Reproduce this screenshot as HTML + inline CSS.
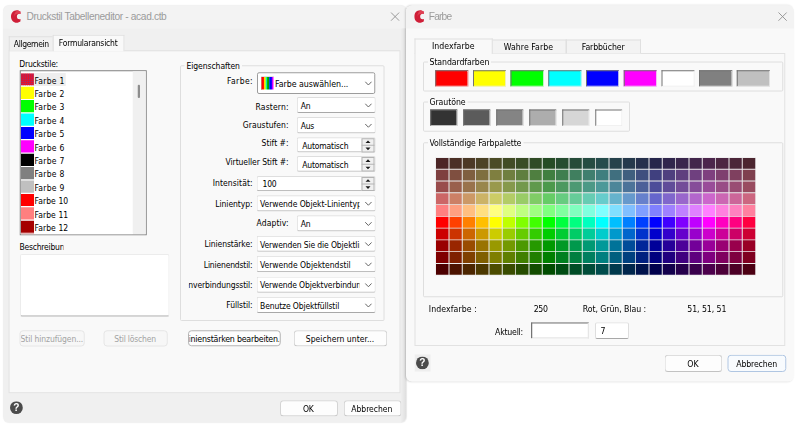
<!DOCTYPE html>
<html lang="de"><head><meta charset="utf-8"><title>Druckstil Tabelleneditor</title>
<style>
html,body{margin:0;padding:0;background:#fff;}
body{width:800px;height:429px;position:relative;overflow:hidden;font-family:"Liberation Sans",sans-serif;}
.sc{position:absolute;left:0;top:0;width:3200px;height:1716px;transform:scale(.25);transform-origin:0 0;}
.a{position:absolute;box-sizing:border-box;}
.t{white-space:nowrap;}
.t span{white-space:nowrap;}

.dlg{border-radius:24px;overflow:hidden;}
.btn{border:4px solid #d4d4d4;border-bottom-color:#c2c2c2;border-radius:14px;background:#fdfdfd;overflow:hidden;}
.btnd{border:4px solid #e6e6e6;border-radius:14px;background:#f7f7f7;overflow:hidden;}
.cb{border:4px solid #dedede;border-bottom-color:#a8a8a8;border-radius:8px;background:#fff;overflow:hidden;}
.grp{border:4px solid #dedede;border-radius:6px;}
.sw{border-style:solid;border-width:4.8px 3.2px 3.2px 4.8px;border-color:#727272 #ececec #ececec #727272;}

</style></head><body>
<div class="sc">
<div class="a dlg" style="left:12px;top:22px;width:1613.2px;height:1668px;background:#f0f0f0;box-shadow:0 0 4px rgba(0,0,0,.08);"></div>
<div class="a " style="left:12px;top:22px;width:1613.2px;height:92.4px;background:#f3f3f3;border-radius:24px 24px 0 0;"></div>
<div class="a " style="left:1602.4px;top:112.8px;width:22.8px;height:1577.2px;background:linear-gradient(90deg,rgba(0,0,0,0),rgba(0,0,0,0.075));border-radius:0 0 24px 0;"></div>
<svg class="a" style="left:44px;top:39.6px" width="39.2" height="52" viewBox="0 0 9.8 13"><path d="M6.6 0.2 C2.8 -0.3 0 2.6 0 6.5 C0 10.4 2.8 13.3 6.6 12.8 L9.5 11.4 L9.8 8.9 C8.3 9.7 5.9 9.3 5.9 6.5 C5.9 3.7 8.3 3.3 9.8 4.1 L9.5 1.6 Z" fill="#cf1f38"/><path d="M6.6 0.2 C4.2 1.5 3 4 3.2 6.8 C3.6 4.5 5.5 3 9.8 4.1 L9.5 1.6 Z" fill="#e4485a" opacity="0.8"/></svg>
<div class="a t" style="left:105.6px;top:41.36px;line-height:53.04px;font-size:40.8px;font-family:'Liberation Sans',sans-serif;color:#9b9b9b;letter-spacing:-1.47px;"><span>Druckstil Tabelleneditor - acad.ctb</span></div>
<svg class="a" style="left:1560.6px;top:46.6px" width="38.8" height="38.8" viewBox="0 0 9.7 9.7"><path d="M1 1 L8.7 8.7 M8.7 1 L1 8.7" fill="none" stroke="#8f8f8f" stroke-width="0.9" stroke-linecap="round"/></svg>
<div class="a " style="left:34px;top:200.8px;width:1568px;height:1372px;background:#f9f9f9;border:4px solid #e0e0e0;"></div>
<div class="a " style="left:35.2px;top:144.8px;width:178.8px;height:58px;background:#f0f0f0;border:4px solid #e0e0e0;border-bottom:none;"></div>
<div class="a " style="left:211.2px;top:139.2px;width:286.8px;height:65.6px;background:#f9f9f9;border:4px solid #e0e0e0;border-bottom:none;"></div>
<div class="a t" style="left:55.2px;top:154.72px;line-height:44.2px;font-size:34px;font-family:'DejaVu Sans Condensed','Liberation Sans',sans-serif;color:#000;letter-spacing:-1.41px;"><span>Allgemein</span></div>
<div class="a t" style="left:235.2px;top:150.72px;line-height:44.2px;font-size:34px;font-family:'DejaVu Sans Condensed','Liberation Sans',sans-serif;color:#000;letter-spacing:-0.8px;"><span>Formularansicht</span></div>
<div class="a t" style="left:77.2px;top:231.92px;line-height:44.2px;font-size:34px;font-family:'DejaVu Sans Condensed','Liberation Sans',sans-serif;color:#000;letter-spacing:-0.85px;"><span>Druckstile:</span></div>
<div class="a " style="left:79.2px;top:281.2px;width:508px;height:659.6px;background:#fff;border:4px solid #7f7f7f;overflow:hidden;"></div>
<div class="a " style="left:531.2px;top:285.2px;width:52px;height:651.6px;background:#f0f0f0;"></div>
<div class="a " style="left:551.2px;top:338.8px;width:8.8px;height:53.6px;background:#8d8d8d;border-radius:4px;"></div>
<div class="a " style="left:136.4px;top:292.4px;width:126.8px;height:52px;background:#eeeeee;"></div>
<svg class="a" style="left:84px;top:293.2px" width="51.6" height="48.8" viewBox="0 0 12.9 12.2"><rect width="12.9" height="12.2" fill="#e6122a"/><g fill="#6444a8"><rect x="0.55" y="0.50" width="0.8" height="0.8"/><rect x="2.41" y="0.50" width="0.8" height="0.8"/><rect x="4.27" y="0.50" width="0.8" height="0.8"/><rect x="6.13" y="0.50" width="0.8" height="0.8"/><rect x="7.99" y="0.50" width="0.8" height="0.8"/><rect x="9.85" y="0.50" width="0.8" height="0.8"/><rect x="11.71" y="0.50" width="0.8" height="0.8"/><rect x="0.55" y="2.36" width="0.8" height="0.8"/><rect x="2.41" y="2.36" width="0.8" height="0.8"/><rect x="4.27" y="2.36" width="0.8" height="0.8"/><rect x="6.13" y="2.36" width="0.8" height="0.8"/><rect x="7.99" y="2.36" width="0.8" height="0.8"/><rect x="9.85" y="2.36" width="0.8" height="0.8"/><rect x="11.71" y="2.36" width="0.8" height="0.8"/><rect x="0.55" y="4.22" width="0.8" height="0.8"/><rect x="2.41" y="4.22" width="0.8" height="0.8"/><rect x="4.27" y="4.22" width="0.8" height="0.8"/><rect x="6.13" y="4.22" width="0.8" height="0.8"/><rect x="7.99" y="4.22" width="0.8" height="0.8"/><rect x="9.85" y="4.22" width="0.8" height="0.8"/><rect x="11.71" y="4.22" width="0.8" height="0.8"/><rect x="0.55" y="6.08" width="0.8" height="0.8"/><rect x="2.41" y="6.08" width="0.8" height="0.8"/><rect x="4.27" y="6.08" width="0.8" height="0.8"/><rect x="6.13" y="6.08" width="0.8" height="0.8"/><rect x="7.99" y="6.08" width="0.8" height="0.8"/><rect x="9.85" y="6.08" width="0.8" height="0.8"/><rect x="11.71" y="6.08" width="0.8" height="0.8"/><rect x="0.55" y="7.94" width="0.8" height="0.8"/><rect x="2.41" y="7.94" width="0.8" height="0.8"/><rect x="4.27" y="7.94" width="0.8" height="0.8"/><rect x="6.13" y="7.94" width="0.8" height="0.8"/><rect x="7.99" y="7.94" width="0.8" height="0.8"/><rect x="9.85" y="7.94" width="0.8" height="0.8"/><rect x="11.71" y="7.94" width="0.8" height="0.8"/><rect x="0.55" y="9.80" width="0.8" height="0.8"/><rect x="2.41" y="9.80" width="0.8" height="0.8"/><rect x="4.27" y="9.80" width="0.8" height="0.8"/><rect x="6.13" y="9.80" width="0.8" height="0.8"/><rect x="7.99" y="9.80" width="0.8" height="0.8"/><rect x="9.85" y="9.80" width="0.8" height="0.8"/><rect x="11.71" y="9.80" width="0.8" height="0.8"/><rect x="0.55" y="11.66" width="0.8" height="0.8"/><rect x="2.41" y="11.66" width="0.8" height="0.8"/><rect x="4.27" y="11.66" width="0.8" height="0.8"/><rect x="6.13" y="11.66" width="0.8" height="0.8"/><rect x="7.99" y="11.66" width="0.8" height="0.8"/><rect x="9.85" y="11.66" width="0.8" height="0.8"/><rect x="11.71" y="11.66" width="0.8" height="0.8"/></g></svg>
<div class="a t" style="left:138px;top:299.52px;line-height:44.2px;font-size:34px;font-family:'DejaVu Sans Condensed','Liberation Sans',sans-serif;color:#000;letter-spacing:0.97px;"><span>Farbe 1</span></div>
<div class="a " style="left:84px;top:346.8px;width:51.6px;height:48.8px;background:#ffff00;"></div>
<div class="a t" style="left:138px;top:353.12px;line-height:44.2px;font-size:34px;font-family:'DejaVu Sans Condensed','Liberation Sans',sans-serif;color:#000;letter-spacing:0.97px;"><span>Farbe 2</span></div>
<div class="a " style="left:84px;top:400.4px;width:51.6px;height:48.8px;background:#00ff00;"></div>
<div class="a t" style="left:138px;top:406.72px;line-height:44.2px;font-size:34px;font-family:'DejaVu Sans Condensed','Liberation Sans',sans-serif;color:#000;letter-spacing:0.97px;"><span>Farbe 3</span></div>
<div class="a " style="left:84px;top:454px;width:51.6px;height:48.8px;background:#00ffff;"></div>
<div class="a t" style="left:138px;top:460.32px;line-height:44.2px;font-size:34px;font-family:'DejaVu Sans Condensed','Liberation Sans',sans-serif;color:#000;letter-spacing:0.97px;"><span>Farbe 4</span></div>
<div class="a " style="left:84px;top:507.6px;width:51.6px;height:48.8px;background:#0000ff;"></div>
<div class="a t" style="left:138px;top:513.92px;line-height:44.2px;font-size:34px;font-family:'DejaVu Sans Condensed','Liberation Sans',sans-serif;color:#000;letter-spacing:0.97px;"><span>Farbe 5</span></div>
<div class="a " style="left:84px;top:561.2px;width:51.6px;height:48.8px;background:#ff00ff;"></div>
<div class="a t" style="left:138px;top:567.52px;line-height:44.2px;font-size:34px;font-family:'DejaVu Sans Condensed','Liberation Sans',sans-serif;color:#000;letter-spacing:0.97px;"><span>Farbe 6</span></div>
<div class="a " style="left:84px;top:614.8px;width:51.6px;height:48.8px;background:#000000;"></div>
<div class="a t" style="left:138px;top:621.12px;line-height:44.2px;font-size:34px;font-family:'DejaVu Sans Condensed','Liberation Sans',sans-serif;color:#000;letter-spacing:0.97px;"><span>Farbe 7</span></div>
<div class="a " style="left:84px;top:668.4px;width:51.6px;height:48.8px;background:#808080;"></div>
<div class="a t" style="left:138px;top:674.72px;line-height:44.2px;font-size:34px;font-family:'DejaVu Sans Condensed','Liberation Sans',sans-serif;color:#000;letter-spacing:0.97px;"><span>Farbe 8</span></div>
<div class="a " style="left:84px;top:722px;width:51.6px;height:48.8px;background:#c0c0c0;"></div>
<div class="a t" style="left:138px;top:728.32px;line-height:44.2px;font-size:34px;font-family:'DejaVu Sans Condensed','Liberation Sans',sans-serif;color:#000;letter-spacing:0.97px;"><span>Farbe 9</span></div>
<div class="a " style="left:84px;top:775.6px;width:51.6px;height:48.8px;background:#ff0000;"></div>
<div class="a t" style="left:138px;top:781.92px;line-height:44.2px;font-size:34px;font-family:'DejaVu Sans Condensed','Liberation Sans',sans-serif;color:#000;letter-spacing:0.32px;"><span>Farbe 10</span></div>
<div class="a " style="left:84px;top:829.2px;width:51.6px;height:48.8px;background:#ff7f7f;"></div>
<div class="a t" style="left:138px;top:835.52px;line-height:44.2px;font-size:34px;font-family:'DejaVu Sans Condensed','Liberation Sans',sans-serif;color:#000;letter-spacing:0.32px;"><span>Farbe 11</span></div>
<div class="a " style="left:84px;top:882.8px;width:51.6px;height:48.8px;background:#a50000;"></div>
<div class="a t" style="left:138px;top:889.12px;line-height:44.2px;font-size:34px;font-family:'DejaVu Sans Condensed','Liberation Sans',sans-serif;color:#000;letter-spacing:0.32px;"><span>Farbe 12</span></div>
<div class="a " style="left:83.2px;top:931.2px;width:448px;height:5.6px;background:#fff;"></div>
<div class="a " style="left:84px;top:933.2px;width:51.6px;height:3.6px;background:#dd9a9a;"></div>
<div class="a" style="left:76px;top:964.72px;width:178.4px;height:44.2px;overflow:hidden"><div class="a t" style="left:2px;top:0px;line-height:44.2px;font-size:34px;font-family:'DejaVu Sans Condensed','Liberation Sans',sans-serif;color:#000;letter-spacing:-0.91px;"><span>Beschreibung:</span></div></div>
<div class="a " style="left:80px;top:1016px;width:598.4px;height:251.2px;background:#fff;border:4px solid #ececec;border-bottom:5.6px solid #a9a9a9;border-radius:8px;"></div>
<div class="a btnd" style="left:77.6px;top:1320.8px;width:261.2px;height:65.2px;"></div>
<div class="a btnd" style="left:413.6px;top:1320.8px;width:257.2px;height:65.2px;"></div>
<div class="a" style="left:84px;top:1333.52px;width:250.4px;height:44.2px;overflow:hidden"><div class="a t" style="right:1.6px;top:0px;line-height:44.2px;font-size:34px;font-family:'DejaVu Sans Condensed','Liberation Sans',sans-serif;color:#a3a3a3;letter-spacing:-0.4px;"><span>Stil hinzufügen...</span></div></div>
<div class="a t" style="left:457.2px;top:1333.52px;line-height:44.2px;font-size:34px;font-family:'DejaVu Sans Condensed','Liberation Sans',sans-serif;color:#a3a3a3;letter-spacing:-0.81px;"><span>Stil löschen</span></div>
<div class="a grp" style="left:720px;top:260.8px;width:818px;height:1023.2px;"></div>
<div class="a " style="left:738px;top:240px;width:230px;height:48px;background:#f9f9f9;"></div>
<div class="a t" style="left:745.6px;top:243.12px;line-height:44.2px;font-size:34px;font-family:'DejaVu Sans Condensed','Liberation Sans',sans-serif;color:#000;letter-spacing:-0.21px;"><span>Eigenschaften</span></div>
<div class="a t" style="right:2188px;top:299.52px;line-height:44.2px;font-size:34px;font-family:'DejaVu Sans Condensed','Liberation Sans',sans-serif;color:#000;letter-spacing:1.61px;"><span>Farbe:</span></div>
<div class="a cb" style="left:1028px;top:289.2px;width:472.8px;height:86.4px;border-color:#9c9c9c;"></div>
<svg class="a" style="left:1458px;top:324px" width="31.2" height="20" viewBox="0 0 7.80 5.00"><path d="M1 1 L3.90 4.00 L6.80 1" fill="none" stroke="#5e5e5e" stroke-width="0.95" stroke-linecap="round" stroke-linejoin="round"/></svg>
<div class="a t" style="left:1100px;top:313.16px;line-height:45.76px;font-size:35.2px;font-family:'DejaVu Sans Condensed','Liberation Sans',sans-serif;color:#000;letter-spacing:-0.2px;"><span>Farbe auswählen...</span></div>
<div class="a " style="left:1045.6px;top:308px;width:48.8px;height:50.4px;background:linear-gradient(90deg,#ff0000 0%,#ff0000 16%,#ffd000 24%,#ffff00 30%,#20ff80 38%,#00e8c0 43%,#00c000 50%,#00a000 58%,#0060e0 66%,#0000ff 72%,#0000ff 82%,#c000ff 90%,#ff00ff 96%);box-shadow:0 0 0 1.6px #b0b0b0;"></div>
<div class="a t" style="right:2044.96px;top:406.32px;line-height:44.2px;font-size:34px;font-family:'DejaVu Sans Condensed','Liberation Sans',sans-serif;color:#000;letter-spacing:0.64px;"><span>Rastern:</span></div>
<div class="a cb" style="left:1187.2px;top:387.6px;width:315.6px;height:64px;"></div>
<svg class="a" style="left:1458px;top:411.8px" width="31.2" height="20" viewBox="0 0 7.80 5.00"><path d="M1 1 L3.90 4.00 L6.80 1" fill="none" stroke="#5e5e5e" stroke-width="0.95" stroke-linecap="round" stroke-linejoin="round"/></svg>
<div class="a t" style="left:1203.2px;top:400.72px;line-height:44.2px;font-size:34px;font-family:'DejaVu Sans Condensed','Liberation Sans',sans-serif;color:#000;letter-spacing:-1.16px;"><span>An</span></div>
<div class="a t" style="right:2045.36px;top:477.92px;line-height:44.2px;font-size:34px;font-family:'DejaVu Sans Condensed','Liberation Sans',sans-serif;color:#000;letter-spacing:0.24px;"><span>Graustufen:</span></div>
<div class="a cb" style="left:1187.2px;top:468.4px;width:315.6px;height:65.6px;"></div>
<svg class="a" style="left:1458px;top:493.4px" width="31.2" height="20" viewBox="0 0 7.80 5.00"><path d="M1 1 L3.90 4.00 L6.80 1" fill="none" stroke="#5e5e5e" stroke-width="0.95" stroke-linecap="round" stroke-linejoin="round"/></svg>
<div class="a t" style="left:1203.2px;top:481.12px;line-height:44.2px;font-size:34px;font-family:'DejaVu Sans Condensed','Liberation Sans',sans-serif;color:#000;letter-spacing:-1.42px;"><span>Aus</span></div>
<div class="a t" style="right:2045.52px;top:550.32px;line-height:44.2px;font-size:34px;font-family:'DejaVu Sans Condensed','Liberation Sans',sans-serif;color:#000;letter-spacing:0.08px;"><span>Stift #:</span></div>
<div class="a cb" style="left:1187.2px;top:549.2px;width:315.6px;height:61.2px;"></div>
<div class="a " style="left:1445.6px;top:552.8px;width:52px;height:56.8px;background:#f0f0f0;border:4px solid #b4b4b4;"></div>
<div class="a " style="left:1445.6px;top:579.2px;width:52px;height:4px;background:#b4b4b4;"></div>
<svg class="a" style="left:1459.6px;top:552.8px" width="24" height="56.8" viewBox="0 0 6 14.20"><path d="M0.5 4.85 L3 2.15 L5.5 4.85 Z M0.5 9.35 L3 12.05 L5.5 9.35 Z" fill="#1a1a1a"/></svg>
<div class="a t" style="left:1209.2px;top:561.52px;line-height:44.2px;font-size:34px;font-family:'DejaVu Sans Condensed','Liberation Sans',sans-serif;color:#000;letter-spacing:-0.74px;"><span>Automatisch</span></div>
<div class="a t" style="right:2045.88px;top:626.32px;line-height:44.2px;font-size:34px;font-family:'DejaVu Sans Condensed','Liberation Sans',sans-serif;color:#000;letter-spacing:-0.28px;"><span>Virtueller Stift #:</span></div>
<div class="a cb" style="left:1187.2px;top:624px;width:315.6px;height:62.8px;"></div>
<div class="a " style="left:1445.6px;top:627.6px;width:52px;height:58.4px;background:#f0f0f0;border:4px solid #b4b4b4;"></div>
<div class="a " style="left:1445.6px;top:654.8px;width:52px;height:4px;background:#b4b4b4;"></div>
<svg class="a" style="left:1459.6px;top:627.6px" width="24" height="58.4" viewBox="0 0 6 14.60"><path d="M0.5 4.95 L3 2.25 L5.5 4.95 Z M0.5 9.65 L3 12.35 L5.5 9.65 Z" fill="#1a1a1a"/></svg>
<div class="a t" style="left:1209.2px;top:637.12px;line-height:44.2px;font-size:34px;font-family:'DejaVu Sans Condensed','Liberation Sans',sans-serif;color:#000;letter-spacing:-0.74px;"><span>Automatisch</span></div>
<div class="a t" style="right:2189.24px;top:710.72px;line-height:44.2px;font-size:34px;font-family:'DejaVu Sans Condensed','Liberation Sans',sans-serif;color:#000;letter-spacing:0.36px;"><span>Intensität:</span></div>
<div class="a cb" style="left:1025.6px;top:704px;width:477.2px;height:61.2px;"></div>
<div class="a " style="left:1445.6px;top:707.6px;width:52px;height:56.8px;background:#f0f0f0;border:4px solid #b4b4b4;"></div>
<div class="a " style="left:1445.6px;top:734px;width:52px;height:4px;background:#b4b4b4;"></div>
<svg class="a" style="left:1459.6px;top:707.6px" width="24" height="56.8" viewBox="0 0 6 14.20"><path d="M0.5 4.85 L3 2.15 L5.5 4.85 Z M0.5 9.35 L3 12.05 L5.5 9.35 Z" fill="#1a1a1a"/></svg>
<div class="a t" style="left:1050.4px;top:714.32px;line-height:44.2px;font-size:34px;font-family:'DejaVu Sans Condensed','Liberation Sans',sans-serif;color:#000;letter-spacing:-1.06px;"><span>100</span></div>
<div class="a t" style="right:2189.88px;top:793.52px;line-height:44.2px;font-size:34px;font-family:'DejaVu Sans Condensed','Liberation Sans',sans-serif;color:#000;letter-spacing:-0.27px;"><span>Linientyp:</span></div>
<div class="a cb" style="left:1025.6px;top:780.8px;width:477.2px;height:64.8px;"></div>
<svg class="a" style="left:1458px;top:805.4px" width="31.2" height="20" viewBox="0 0 7.80 5.00"><path d="M1 1 L3.90 4.00 L6.80 1" fill="none" stroke="#5e5e5e" stroke-width="0.95" stroke-linecap="round" stroke-linejoin="round"/></svg>
<div class="a" style="left:1036px;top:792.32px;width:402.4px;height:44.2px;overflow:hidden"><div class="a t" style="left:4px;top:0px;line-height:44.2px;font-size:34px;font-family:'DejaVu Sans Condensed','Liberation Sans',sans-serif;color:#000;letter-spacing:-0.26px;"><span>Verwende Objekt-Linientyp</span></div></div>
<div class="a t" style="right:2045.12px;top:868.72px;line-height:44.2px;font-size:34px;font-family:'DejaVu Sans Condensed','Liberation Sans',sans-serif;color:#000;letter-spacing:0.48px;"><span>Adaptiv:</span></div>
<div class="a cb" style="left:1187.2px;top:861.2px;width:315.6px;height:64.8px;"></div>
<svg class="a" style="left:1458px;top:885.8px" width="31.2" height="20" viewBox="0 0 7.80 5.00"><path d="M1 1 L3.90 4.00 L6.80 1" fill="none" stroke="#5e5e5e" stroke-width="0.95" stroke-linecap="round" stroke-linejoin="round"/></svg>
<div class="a t" style="left:1203.2px;top:875.12px;line-height:44.2px;font-size:34px;font-family:'DejaVu Sans Condensed','Liberation Sans',sans-serif;color:#000;letter-spacing:-1.16px;"><span>An</span></div>
<div class="a t" style="right:2189.96px;top:953.12px;line-height:44.2px;font-size:34px;font-family:'DejaVu Sans Condensed','Liberation Sans',sans-serif;color:#000;letter-spacing:-0.35px;"><span>Linienstärke:</span></div>
<div class="a cb" style="left:1025.6px;top:942.8px;width:477.2px;height:64px;"></div>
<svg class="a" style="left:1458px;top:967px" width="31.2" height="20" viewBox="0 0 7.80 5.00"><path d="M1 1 L3.90 4.00 L6.80 1" fill="none" stroke="#5e5e5e" stroke-width="0.95" stroke-linecap="round" stroke-linejoin="round"/></svg>
<div class="a" style="left:1036px;top:955.52px;width:402.4px;height:44.2px;overflow:hidden"><div class="a t" style="left:4px;top:0px;line-height:44.2px;font-size:34px;font-family:'DejaVu Sans Condensed','Liberation Sans',sans-serif;color:#000;letter-spacing:-0.52px;"><span>Verwenden Sie die Objektlinienstärke</span></div></div>
<div class="a t" style="right:2190.32px;top:1036.32px;line-height:44.2px;font-size:34px;font-family:'DejaVu Sans Condensed','Liberation Sans',sans-serif;color:#000;letter-spacing:-0.72px;"><span>Linienendstil:</span></div>
<div class="a cb" style="left:1025.6px;top:1023.2px;width:477.2px;height:66px;"></div>
<svg class="a" style="left:1458px;top:1048.4px" width="31.2" height="20" viewBox="0 0 7.80 5.00"><path d="M1 1 L3.90 4.00 L6.80 1" fill="none" stroke="#5e5e5e" stroke-width="0.95" stroke-linecap="round" stroke-linejoin="round"/></svg>
<div class="a t" style="left:1040px;top:1038.32px;line-height:44.2px;font-size:34px;font-family:'DejaVu Sans Condensed','Liberation Sans',sans-serif;color:#000;letter-spacing:-0.07px;"><span>Verwende Objektendstil</span></div>
<div class="a" style="left:754.8px;top:1117.52px;width:257.2px;height:44.2px;overflow:hidden"><div class="a t" style="right:2.08px;top:0px;line-height:44.2px;font-size:34px;font-family:'DejaVu Sans Condensed','Liberation Sans',sans-serif;color:#000;letter-spacing:-0.48px;"><span>Linienverbindungsstil:</span></div></div>
<div class="a cb" style="left:1025.6px;top:1106px;width:477.2px;height:64.8px;"></div>
<svg class="a" style="left:1458px;top:1130.6px" width="31.2" height="20" viewBox="0 0 7.80 5.00"><path d="M1 1 L3.90 4.00 L6.80 1" fill="none" stroke="#5e5e5e" stroke-width="0.95" stroke-linecap="round" stroke-linejoin="round"/></svg>
<div class="a" style="left:1036px;top:1119.12px;width:402.4px;height:44.2px;overflow:hidden"><div class="a t" style="left:4px;top:0px;line-height:44.2px;font-size:34px;font-family:'DejaVu Sans Condensed','Liberation Sans',sans-serif;color:#000;letter-spacing:-0.51px;"><span>Verwende Objektverbindungsstil</span></div></div>
<div class="a t" style="right:2189.88px;top:1197.92px;line-height:44.2px;font-size:34px;font-family:'DejaVu Sans Condensed','Liberation Sans',sans-serif;color:#000;letter-spacing:-0.29px;"><span>Füllstil:</span></div>
<div class="a cb" style="left:1025.6px;top:1186.8px;width:477.2px;height:65.2px;"></div>
<svg class="a" style="left:1458px;top:1211.6px" width="31.2" height="20" viewBox="0 0 7.80 5.00"><path d="M1 1 L3.90 4.00 L6.80 1" fill="none" stroke="#5e5e5e" stroke-width="0.95" stroke-linecap="round" stroke-linejoin="round"/></svg>
<div class="a t" style="left:1040.4px;top:1201.52px;line-height:44.2px;font-size:34px;font-family:'DejaVu Sans Condensed','Liberation Sans',sans-serif;color:#000;letter-spacing:-0.52px;"><span>Benutze Objektfüllstil</span></div>
<div class="a btn" style="left:752px;top:1320.8px;width:370.8px;height:64.4px;border-color:#b4b4b4;"></div>
<div class="a" style="left:758.4px;top:1332.76px;width:358.4px;height:45.76px;overflow:hidden"><div class="a t" style="left:-420.48px;width:1200px;text-align:center;top:0px;line-height:45.76px;font-size:35.2px;font-family:'DejaVu Sans Condensed','Liberation Sans',sans-serif;color:#000;letter-spacing:-0.92px;"><span>Linienstärken bearbeiten...</span></div></div>
<div class="a btn" style="left:1175.2px;top:1320.8px;width:374px;height:65.2px;"></div>
<div class="a t" style="left:1223.2px;top:1333.92px;line-height:44.2px;font-size:34px;font-family:'DejaVu Sans Condensed','Liberation Sans',sans-serif;color:#000;letter-spacing:0.2px;"><span>Speichern unter...</span></div>
<svg class="a" style="left:40px;top:1604.8px" width="51.2" height="51.2" viewBox="0 0 12 12"><circle cx="6" cy="6" r="6" fill="#4b4b4b"/><text x="6" y="9.3" text-anchor="middle" font-family="Liberation Sans,sans-serif" font-weight="bold" font-size="9.5" fill="#fff">?</text></svg>
<div class="a btn" style="left:1119.6px;top:1600.8px;width:232.4px;height:64.8px;"></div>
<div class="a t" style="left:1212px;top:1615.12px;line-height:44.2px;font-size:34px;font-family:'DejaVu Sans Condensed','Liberation Sans',sans-serif;color:#000;letter-spacing:-0.87px;"><span>OK</span></div>
<div class="a btn" style="left:1374.8px;top:1600.8px;width:230.8px;height:64.8px;"></div>
<div class="a t" style="left:1404.8px;top:1615.12px;line-height:44.2px;font-size:34px;font-family:'DejaVu Sans Condensed','Liberation Sans',sans-serif;color:#000;letter-spacing:-0px;"><span>Abbrechen</span></div>
<div class="a dlg" style="left:1624px;top:22px;width:1552px;height:1504.4px;background:#f9f9f9;box-shadow:-4px 0 8px rgba(0,0,0,.16);"></div>
<div class="a " style="left:1624px;top:22px;width:1552px;height:92px;background:#f3f3f3;border-radius:24px 24px 0 0;"></div>
<svg class="a" style="left:1656.8px;top:39.6px" width="39.2" height="52" viewBox="0 0 9.8 13"><path d="M6.6 0.2 C2.8 -0.3 0 2.6 0 6.5 C0 10.4 2.8 13.3 6.6 12.8 L9.5 11.4 L9.8 8.9 C8.3 9.7 5.9 9.3 5.9 6.5 C5.9 3.7 8.3 3.3 9.8 4.1 L9.5 1.6 Z" fill="#cf1f38"/><path d="M6.6 0.2 C4.2 1.5 3 4 3.2 6.8 C3.6 4.5 5.5 3 9.8 4.1 L9.5 1.6 Z" fill="#e4485a" opacity="0.8"/></svg>
<div class="a t" style="left:1715.2px;top:41.36px;line-height:53.04px;font-size:40.8px;font-family:'Liberation Sans',sans-serif;color:#9b9b9b;letter-spacing:-3.32px;"><span>Farbe</span></div>
<svg class="a" style="left:3111.4px;top:46.6px" width="38.8" height="38.8" viewBox="0 0 9.7 9.7"><path d="M1 1 L8.7 8.7 M8.7 1 L1 8.7" fill="none" stroke="#8f8f8f" stroke-width="0.9" stroke-linecap="round"/></svg>
<div class="a " style="left:1658px;top:212px;width:1483.2px;height:1172px;background:#f9f9f9;border:4px solid #e2e2e2;"></div>
<div class="a " style="left:1968px;top:158px;width:298px;height:56px;background:#f3f3f3;border:4px solid #e0e0e0;border-bottom:none;"></div>
<div class="a " style="left:2264px;top:158px;width:300px;height:56px;background:#f3f3f3;border:4px solid #e0e0e0;border-bottom:none;"></div>
<div class="a " style="left:1658px;top:154px;width:313.2px;height:62px;background:#f9f9f9;border:4px solid #e0e0e0;border-bottom:none;"></div>
<div class="a t" style="left:1728px;top:162.32px;line-height:45.24px;font-size:34.8px;font-family:'DejaVu Sans Condensed','Liberation Sans',sans-serif;color:#000;letter-spacing:0.17px;"><span>Indexfarbe</span></div>
<div class="a t" style="left:2015.2px;top:167.12px;line-height:45.24px;font-size:34.8px;font-family:'DejaVu Sans Condensed','Liberation Sans',sans-serif;color:#000;letter-spacing:0.16px;"><span>Wahre Farbe</span></div>
<div class="a t" style="left:2327.2px;top:167.12px;line-height:45.24px;font-size:34.8px;font-family:'DejaVu Sans Condensed','Liberation Sans',sans-serif;color:#000;letter-spacing:-0.48px;"><span>Farbbücher</span></div>
<div class="a grp" style="left:1692px;top:246px;width:1440.8px;height:120px;"></div>
<div class="a " style="left:1712px;top:224px;width:252px;height:48px;background:#f9f9f9;"></div>
<div class="a t" style="left:1718px;top:225.12px;line-height:45.24px;font-size:34.8px;font-family:'DejaVu Sans Condensed','Liberation Sans',sans-serif;color:#000;letter-spacing:-0.37px;"><span>Standardfarben</span></div>
<div class="a sw" style="left:1740.8px;top:281.2px;width:132.4px;height:65.2px;background:#ff0000;"></div>
<div class="a sw" style="left:1891.6px;top:281.2px;width:132.4px;height:65.2px;background:#ffff00;"></div>
<div class="a sw" style="left:2042.4px;top:281.2px;width:132.4px;height:65.2px;background:#00ff00;"></div>
<div class="a sw" style="left:2193.2px;top:281.2px;width:132.4px;height:65.2px;background:#00ffff;"></div>
<div class="a sw" style="left:2344px;top:281.2px;width:132.4px;height:65.2px;background:#0000ff;"></div>
<div class="a sw" style="left:2494.8px;top:281.2px;width:132.4px;height:65.2px;background:#ff00ff;"></div>
<div class="a sw" style="left:2645.6px;top:281.2px;width:132.4px;height:65.2px;background:#ffffff;"></div>
<div class="a sw" style="left:2796.4px;top:281.2px;width:132.4px;height:65.2px;background:#808080;"></div>
<div class="a sw" style="left:2947.2px;top:281.2px;width:132.4px;height:65.2px;background:#c0c0c0;"></div>
<div class="a grp" style="left:1692px;top:406.4px;width:828px;height:120.4px;"></div>
<div class="a " style="left:1712px;top:384px;width:158px;height:48px;background:#f9f9f9;"></div>
<div class="a t" style="left:1718px;top:387.12px;line-height:45.24px;font-size:34.8px;font-family:'DejaVu Sans Condensed','Liberation Sans',sans-serif;color:#000;letter-spacing:-0.34px;"><span>Grautöne</span></div>
<div class="a sw" style="left:1721.2px;top:438.4px;width:108px;height:65.2px;background:#333333;"></div>
<div class="a sw" style="left:1853.2px;top:438.4px;width:108px;height:65.2px;background:#5b5b5b;"></div>
<div class="a sw" style="left:1985.2px;top:438.4px;width:108px;height:65.2px;background:#848484;"></div>
<div class="a sw" style="left:2117.2px;top:438.4px;width:108px;height:65.2px;background:#adadad;"></div>
<div class="a sw" style="left:2249.2px;top:438.4px;width:108px;height:65.2px;background:#d6d6d6;"></div>
<div class="a sw" style="left:2381.2px;top:438.4px;width:108px;height:65.2px;background:#ffffff;"></div>
<div class="a grp" style="left:1692px;top:569.2px;width:1441.2px;height:620px;"></div>
<div class="a " style="left:1712px;top:546px;width:382px;height:48px;background:#f9f9f9;"></div>
<div class="a t" style="left:1718px;top:549.92px;line-height:45.24px;font-size:34.8px;font-family:'DejaVu Sans Condensed','Liberation Sans',sans-serif;color:#000;letter-spacing:-0.45px;"><span>Vollständige Farbpalette</span></div>
<div class="a " style="left:1741.2px;top:628.8px;width:1282.76px;height:473.6px;background:#ececec;"></div>
<div class="a " style="left:1744.2px;top:631.8px;width:49.72px;height:43.48px;background:#4c2626;"></div>
<div class="a " style="left:1797.52px;top:631.8px;width:49.72px;height:43.48px;background:#4c3026;"></div>
<div class="a " style="left:1850.88px;top:631.8px;width:49.72px;height:43.48px;background:#4c3926;"></div>
<div class="a " style="left:1904.2px;top:631.8px;width:49.72px;height:43.48px;background:#4c4226;"></div>
<div class="a " style="left:1957.52px;top:631.8px;width:49.72px;height:43.48px;background:#4c4c26;"></div>
<div class="a " style="left:2010.88px;top:631.8px;width:49.72px;height:43.48px;background:#424c26;"></div>
<div class="a " style="left:2064.2px;top:631.8px;width:49.72px;height:43.48px;background:#394c26;"></div>
<div class="a " style="left:2117.52px;top:631.8px;width:49.72px;height:43.48px;background:#304c26;"></div>
<div class="a " style="left:2170.84px;top:631.8px;width:49.72px;height:43.48px;background:#264c26;"></div>
<div class="a " style="left:2224.2px;top:631.8px;width:49.72px;height:43.48px;background:#264c30;"></div>
<div class="a " style="left:2277.52px;top:631.8px;width:49.72px;height:43.48px;background:#264c39;"></div>
<div class="a " style="left:2330.84px;top:631.8px;width:49.72px;height:43.48px;background:#264c42;"></div>
<div class="a " style="left:2384.2px;top:631.8px;width:49.72px;height:43.48px;background:#264c4c;"></div>
<div class="a " style="left:2437.52px;top:631.8px;width:49.72px;height:43.48px;background:#26424c;"></div>
<div class="a " style="left:2490.84px;top:631.8px;width:49.72px;height:43.48px;background:#26394c;"></div>
<div class="a " style="left:2544.2px;top:631.8px;width:49.72px;height:43.48px;background:#26304c;"></div>
<div class="a " style="left:2597.52px;top:631.8px;width:49.72px;height:43.48px;background:#26264c;"></div>
<div class="a " style="left:2650.84px;top:631.8px;width:49.72px;height:43.48px;background:#30264c;"></div>
<div class="a " style="left:2704.16px;top:631.8px;width:49.72px;height:43.48px;background:#39264c;"></div>
<div class="a " style="left:2757.52px;top:631.8px;width:49.72px;height:43.48px;background:#42264c;"></div>
<div class="a " style="left:2810.84px;top:631.8px;width:49.72px;height:43.48px;background:#4c264c;"></div>
<div class="a " style="left:2864.16px;top:631.8px;width:49.72px;height:43.48px;background:#4c2642;"></div>
<div class="a " style="left:2917.52px;top:631.8px;width:49.72px;height:43.48px;background:#4c2639;"></div>
<div class="a " style="left:2970.84px;top:631.8px;width:49.72px;height:43.48px;background:#4c2630;"></div>
<div class="a " style="left:1744.2px;top:678.88px;width:49.72px;height:43.48px;background:#7f4040;"></div>
<div class="a " style="left:1797.52px;top:678.88px;width:49.72px;height:43.48px;background:#7f4f40;"></div>
<div class="a " style="left:1850.88px;top:678.88px;width:49.72px;height:43.48px;background:#7f5f40;"></div>
<div class="a " style="left:1904.2px;top:678.88px;width:49.72px;height:43.48px;background:#7f6f40;"></div>
<div class="a " style="left:1957.52px;top:678.88px;width:49.72px;height:43.48px;background:#7f7f40;"></div>
<div class="a " style="left:2010.88px;top:678.88px;width:49.72px;height:43.48px;background:#6f7f40;"></div>
<div class="a " style="left:2064.2px;top:678.88px;width:49.72px;height:43.48px;background:#5f7f40;"></div>
<div class="a " style="left:2117.52px;top:678.88px;width:49.72px;height:43.48px;background:#4f7f40;"></div>
<div class="a " style="left:2170.84px;top:678.88px;width:49.72px;height:43.48px;background:#407f40;"></div>
<div class="a " style="left:2224.2px;top:678.88px;width:49.72px;height:43.48px;background:#407f4f;"></div>
<div class="a " style="left:2277.52px;top:678.88px;width:49.72px;height:43.48px;background:#407f5f;"></div>
<div class="a " style="left:2330.84px;top:678.88px;width:49.72px;height:43.48px;background:#407f6f;"></div>
<div class="a " style="left:2384.2px;top:678.88px;width:49.72px;height:43.48px;background:#407f7f;"></div>
<div class="a " style="left:2437.52px;top:678.88px;width:49.72px;height:43.48px;background:#406f7f;"></div>
<div class="a " style="left:2490.84px;top:678.88px;width:49.72px;height:43.48px;background:#405f7f;"></div>
<div class="a " style="left:2544.2px;top:678.88px;width:49.72px;height:43.48px;background:#404f7f;"></div>
<div class="a " style="left:2597.52px;top:678.88px;width:49.72px;height:43.48px;background:#40407f;"></div>
<div class="a " style="left:2650.84px;top:678.88px;width:49.72px;height:43.48px;background:#4f407f;"></div>
<div class="a " style="left:2704.16px;top:678.88px;width:49.72px;height:43.48px;background:#5f407f;"></div>
<div class="a " style="left:2757.52px;top:678.88px;width:49.72px;height:43.48px;background:#6f407f;"></div>
<div class="a " style="left:2810.84px;top:678.88px;width:49.72px;height:43.48px;background:#7f407f;"></div>
<div class="a " style="left:2864.16px;top:678.88px;width:49.72px;height:43.48px;background:#7f406f;"></div>
<div class="a " style="left:2917.52px;top:678.88px;width:49.72px;height:43.48px;background:#7f405f;"></div>
<div class="a " style="left:2970.84px;top:678.88px;width:49.72px;height:43.48px;background:#7f404f;"></div>
<div class="a " style="left:1744.2px;top:725.96px;width:49.72px;height:43.48px;background:#994c4c;"></div>
<div class="a " style="left:1797.52px;top:725.96px;width:49.72px;height:43.48px;background:#99604c;"></div>
<div class="a " style="left:1850.88px;top:725.96px;width:49.72px;height:43.48px;background:#99734c;"></div>
<div class="a " style="left:1904.2px;top:725.96px;width:49.72px;height:43.48px;background:#99864c;"></div>
<div class="a " style="left:1957.52px;top:725.96px;width:49.72px;height:43.48px;background:#99994c;"></div>
<div class="a " style="left:2010.88px;top:725.96px;width:49.72px;height:43.48px;background:#86994c;"></div>
<div class="a " style="left:2064.2px;top:725.96px;width:49.72px;height:43.48px;background:#73994c;"></div>
<div class="a " style="left:2117.52px;top:725.96px;width:49.72px;height:43.48px;background:#60994c;"></div>
<div class="a " style="left:2170.84px;top:725.96px;width:49.72px;height:43.48px;background:#4c994c;"></div>
<div class="a " style="left:2224.2px;top:725.96px;width:49.72px;height:43.48px;background:#4c9960;"></div>
<div class="a " style="left:2277.52px;top:725.96px;width:49.72px;height:43.48px;background:#4c9973;"></div>
<div class="a " style="left:2330.84px;top:725.96px;width:49.72px;height:43.48px;background:#4c9986;"></div>
<div class="a " style="left:2384.2px;top:725.96px;width:49.72px;height:43.48px;background:#4c9999;"></div>
<div class="a " style="left:2437.52px;top:725.96px;width:49.72px;height:43.48px;background:#4c8699;"></div>
<div class="a " style="left:2490.84px;top:725.96px;width:49.72px;height:43.48px;background:#4c7399;"></div>
<div class="a " style="left:2544.2px;top:725.96px;width:49.72px;height:43.48px;background:#4c6099;"></div>
<div class="a " style="left:2597.52px;top:725.96px;width:49.72px;height:43.48px;background:#4c4c99;"></div>
<div class="a " style="left:2650.84px;top:725.96px;width:49.72px;height:43.48px;background:#604c99;"></div>
<div class="a " style="left:2704.16px;top:725.96px;width:49.72px;height:43.48px;background:#734c99;"></div>
<div class="a " style="left:2757.52px;top:725.96px;width:49.72px;height:43.48px;background:#864c99;"></div>
<div class="a " style="left:2810.84px;top:725.96px;width:49.72px;height:43.48px;background:#994c99;"></div>
<div class="a " style="left:2864.16px;top:725.96px;width:49.72px;height:43.48px;background:#994c86;"></div>
<div class="a " style="left:2917.52px;top:725.96px;width:49.72px;height:43.48px;background:#994c73;"></div>
<div class="a " style="left:2970.84px;top:725.96px;width:49.72px;height:43.48px;background:#994c60;"></div>
<div class="a " style="left:1744.2px;top:773.04px;width:49.72px;height:43.48px;background:#cc6666;"></div>
<div class="a " style="left:1797.52px;top:773.04px;width:49.72px;height:43.48px;background:#cc8066;"></div>
<div class="a " style="left:1850.88px;top:773.04px;width:49.72px;height:43.48px;background:#cc9966;"></div>
<div class="a " style="left:1904.2px;top:773.04px;width:49.72px;height:43.48px;background:#ccb366;"></div>
<div class="a " style="left:1957.52px;top:773.04px;width:49.72px;height:43.48px;background:#cccc66;"></div>
<div class="a " style="left:2010.88px;top:773.04px;width:49.72px;height:43.48px;background:#b3cc66;"></div>
<div class="a " style="left:2064.2px;top:773.04px;width:49.72px;height:43.48px;background:#99cc66;"></div>
<div class="a " style="left:2117.52px;top:773.04px;width:49.72px;height:43.48px;background:#80cc66;"></div>
<div class="a " style="left:2170.84px;top:773.04px;width:49.72px;height:43.48px;background:#66cc66;"></div>
<div class="a " style="left:2224.2px;top:773.04px;width:49.72px;height:43.48px;background:#66cc80;"></div>
<div class="a " style="left:2277.52px;top:773.04px;width:49.72px;height:43.48px;background:#66cc99;"></div>
<div class="a " style="left:2330.84px;top:773.04px;width:49.72px;height:43.48px;background:#66ccb3;"></div>
<div class="a " style="left:2384.2px;top:773.04px;width:49.72px;height:43.48px;background:#66cccc;"></div>
<div class="a " style="left:2437.52px;top:773.04px;width:49.72px;height:43.48px;background:#66b3cc;"></div>
<div class="a " style="left:2490.84px;top:773.04px;width:49.72px;height:43.48px;background:#6699cc;"></div>
<div class="a " style="left:2544.2px;top:773.04px;width:49.72px;height:43.48px;background:#6680cc;"></div>
<div class="a " style="left:2597.52px;top:773.04px;width:49.72px;height:43.48px;background:#6666cc;"></div>
<div class="a " style="left:2650.84px;top:773.04px;width:49.72px;height:43.48px;background:#8066cc;"></div>
<div class="a " style="left:2704.16px;top:773.04px;width:49.72px;height:43.48px;background:#9966cc;"></div>
<div class="a " style="left:2757.52px;top:773.04px;width:49.72px;height:43.48px;background:#b366cc;"></div>
<div class="a " style="left:2810.84px;top:773.04px;width:49.72px;height:43.48px;background:#cc66cc;"></div>
<div class="a " style="left:2864.16px;top:773.04px;width:49.72px;height:43.48px;background:#cc66b3;"></div>
<div class="a " style="left:2917.52px;top:773.04px;width:49.72px;height:43.48px;background:#cc6699;"></div>
<div class="a " style="left:2970.84px;top:773.04px;width:49.72px;height:43.48px;background:#cc6680;"></div>
<div class="a " style="left:1744.2px;top:820.12px;width:49.72px;height:43.48px;background:#ff8080;"></div>
<div class="a " style="left:1797.52px;top:820.12px;width:49.72px;height:43.48px;background:#ff9f80;"></div>
<div class="a " style="left:1850.88px;top:820.12px;width:49.72px;height:43.48px;background:#ffbf80;"></div>
<div class="a " style="left:1904.2px;top:820.12px;width:49.72px;height:43.48px;background:#ffdf80;"></div>
<div class="a " style="left:1957.52px;top:820.12px;width:49.72px;height:43.48px;background:#ffff80;"></div>
<div class="a " style="left:2010.88px;top:820.12px;width:49.72px;height:43.48px;background:#dfff80;"></div>
<div class="a " style="left:2064.2px;top:820.12px;width:49.72px;height:43.48px;background:#bfff80;"></div>
<div class="a " style="left:2117.52px;top:820.12px;width:49.72px;height:43.48px;background:#9fff80;"></div>
<div class="a " style="left:2170.84px;top:820.12px;width:49.72px;height:43.48px;background:#80ff80;"></div>
<div class="a " style="left:2224.2px;top:820.12px;width:49.72px;height:43.48px;background:#80ff9f;"></div>
<div class="a " style="left:2277.52px;top:820.12px;width:49.72px;height:43.48px;background:#80ffbf;"></div>
<div class="a " style="left:2330.84px;top:820.12px;width:49.72px;height:43.48px;background:#80ffdf;"></div>
<div class="a " style="left:2384.2px;top:820.12px;width:49.72px;height:43.48px;background:#80ffff;"></div>
<div class="a " style="left:2437.52px;top:820.12px;width:49.72px;height:43.48px;background:#80dfff;"></div>
<div class="a " style="left:2490.84px;top:820.12px;width:49.72px;height:43.48px;background:#80bfff;"></div>
<div class="a " style="left:2544.2px;top:820.12px;width:49.72px;height:43.48px;background:#809fff;"></div>
<div class="a " style="left:2597.52px;top:820.12px;width:49.72px;height:43.48px;background:#8080ff;"></div>
<div class="a " style="left:2650.84px;top:820.12px;width:49.72px;height:43.48px;background:#9f80ff;"></div>
<div class="a " style="left:2704.16px;top:820.12px;width:49.72px;height:43.48px;background:#bf80ff;"></div>
<div class="a " style="left:2757.52px;top:820.12px;width:49.72px;height:43.48px;background:#df80ff;"></div>
<div class="a " style="left:2810.84px;top:820.12px;width:49.72px;height:43.48px;background:#ff80ff;"></div>
<div class="a " style="left:2864.16px;top:820.12px;width:49.72px;height:43.48px;background:#ff80df;"></div>
<div class="a " style="left:2917.52px;top:820.12px;width:49.72px;height:43.48px;background:#ff80bf;"></div>
<div class="a " style="left:2970.84px;top:820.12px;width:49.72px;height:43.48px;background:#ff809f;"></div>
<div class="a " style="left:1744.2px;top:867.2px;width:49.72px;height:43.48px;background:#ff0000;"></div>
<div class="a " style="left:1797.52px;top:867.2px;width:49.72px;height:43.48px;background:#ff4000;"></div>
<div class="a " style="left:1850.88px;top:867.2px;width:49.72px;height:43.48px;background:#ff8000;"></div>
<div class="a " style="left:1904.2px;top:867.2px;width:49.72px;height:43.48px;background:#ffbf00;"></div>
<div class="a " style="left:1957.52px;top:867.2px;width:49.72px;height:43.48px;background:#ffff00;"></div>
<div class="a " style="left:2010.88px;top:867.2px;width:49.72px;height:43.48px;background:#bfff00;"></div>
<div class="a " style="left:2064.2px;top:867.2px;width:49.72px;height:43.48px;background:#80ff00;"></div>
<div class="a " style="left:2117.52px;top:867.2px;width:49.72px;height:43.48px;background:#40ff00;"></div>
<div class="a " style="left:2170.84px;top:867.2px;width:49.72px;height:43.48px;background:#00ff00;"></div>
<div class="a " style="left:2224.2px;top:867.2px;width:49.72px;height:43.48px;background:#00ff40;"></div>
<div class="a " style="left:2277.52px;top:867.2px;width:49.72px;height:43.48px;background:#00ff80;"></div>
<div class="a " style="left:2330.84px;top:867.2px;width:49.72px;height:43.48px;background:#00ffbf;"></div>
<div class="a " style="left:2384.2px;top:867.2px;width:49.72px;height:43.48px;background:#00ffff;"></div>
<div class="a " style="left:2437.52px;top:867.2px;width:49.72px;height:43.48px;background:#00bfff;"></div>
<div class="a " style="left:2490.84px;top:867.2px;width:49.72px;height:43.48px;background:#0080ff;"></div>
<div class="a " style="left:2544.2px;top:867.2px;width:49.72px;height:43.48px;background:#0040ff;"></div>
<div class="a " style="left:2597.52px;top:867.2px;width:49.72px;height:43.48px;background:#0000ff;"></div>
<div class="a " style="left:2650.84px;top:867.2px;width:49.72px;height:43.48px;background:#4000ff;"></div>
<div class="a " style="left:2704.16px;top:867.2px;width:49.72px;height:43.48px;background:#8000ff;"></div>
<div class="a " style="left:2757.52px;top:867.2px;width:49.72px;height:43.48px;background:#bf00ff;"></div>
<div class="a " style="left:2810.84px;top:867.2px;width:49.72px;height:43.48px;background:#ff00ff;"></div>
<div class="a " style="left:2864.16px;top:867.2px;width:49.72px;height:43.48px;background:#ff00bf;"></div>
<div class="a " style="left:2917.52px;top:867.2px;width:49.72px;height:43.48px;background:#ff0080;"></div>
<div class="a " style="left:2970.84px;top:867.2px;width:49.72px;height:43.48px;background:#ff0040;"></div>
<div class="a " style="left:1744.2px;top:914.28px;width:49.72px;height:43.48px;background:#cc0000;"></div>
<div class="a " style="left:1797.52px;top:914.28px;width:49.72px;height:43.48px;background:#cc3300;"></div>
<div class="a " style="left:1850.88px;top:914.28px;width:49.72px;height:43.48px;background:#cc6600;"></div>
<div class="a " style="left:1904.2px;top:914.28px;width:49.72px;height:43.48px;background:#cc9900;"></div>
<div class="a " style="left:1957.52px;top:914.28px;width:49.72px;height:43.48px;background:#cccc00;"></div>
<div class="a " style="left:2010.88px;top:914.28px;width:49.72px;height:43.48px;background:#99cc00;"></div>
<div class="a " style="left:2064.2px;top:914.28px;width:49.72px;height:43.48px;background:#66cc00;"></div>
<div class="a " style="left:2117.52px;top:914.28px;width:49.72px;height:43.48px;background:#33cc00;"></div>
<div class="a " style="left:2170.84px;top:914.28px;width:49.72px;height:43.48px;background:#00cc00;"></div>
<div class="a " style="left:2224.2px;top:914.28px;width:49.72px;height:43.48px;background:#00cc33;"></div>
<div class="a " style="left:2277.52px;top:914.28px;width:49.72px;height:43.48px;background:#00cc66;"></div>
<div class="a " style="left:2330.84px;top:914.28px;width:49.72px;height:43.48px;background:#00cc99;"></div>
<div class="a " style="left:2384.2px;top:914.28px;width:49.72px;height:43.48px;background:#00cccc;"></div>
<div class="a " style="left:2437.52px;top:914.28px;width:49.72px;height:43.48px;background:#0099cc;"></div>
<div class="a " style="left:2490.84px;top:914.28px;width:49.72px;height:43.48px;background:#0066cc;"></div>
<div class="a " style="left:2544.2px;top:914.28px;width:49.72px;height:43.48px;background:#0033cc;"></div>
<div class="a " style="left:2597.52px;top:914.28px;width:49.72px;height:43.48px;background:#0000cc;"></div>
<div class="a " style="left:2650.84px;top:914.28px;width:49.72px;height:43.48px;background:#3300cc;"></div>
<div class="a " style="left:2704.16px;top:914.28px;width:49.72px;height:43.48px;background:#6600cc;"></div>
<div class="a " style="left:2757.52px;top:914.28px;width:49.72px;height:43.48px;background:#9900cc;"></div>
<div class="a " style="left:2810.84px;top:914.28px;width:49.72px;height:43.48px;background:#cc00cc;"></div>
<div class="a " style="left:2864.16px;top:914.28px;width:49.72px;height:43.48px;background:#cc0099;"></div>
<div class="a " style="left:2917.52px;top:914.28px;width:49.72px;height:43.48px;background:#cc0066;"></div>
<div class="a " style="left:2970.84px;top:914.28px;width:49.72px;height:43.48px;background:#cc0033;"></div>
<div class="a " style="left:1744.2px;top:961.36px;width:49.72px;height:43.48px;background:#990000;"></div>
<div class="a " style="left:1797.52px;top:961.36px;width:49.72px;height:43.48px;background:#992600;"></div>
<div class="a " style="left:1850.88px;top:961.36px;width:49.72px;height:43.48px;background:#994c00;"></div>
<div class="a " style="left:1904.2px;top:961.36px;width:49.72px;height:43.48px;background:#997300;"></div>
<div class="a " style="left:1957.52px;top:961.36px;width:49.72px;height:43.48px;background:#999900;"></div>
<div class="a " style="left:2010.88px;top:961.36px;width:49.72px;height:43.48px;background:#739900;"></div>
<div class="a " style="left:2064.2px;top:961.36px;width:49.72px;height:43.48px;background:#4c9900;"></div>
<div class="a " style="left:2117.52px;top:961.36px;width:49.72px;height:43.48px;background:#269900;"></div>
<div class="a " style="left:2170.84px;top:961.36px;width:49.72px;height:43.48px;background:#009900;"></div>
<div class="a " style="left:2224.2px;top:961.36px;width:49.72px;height:43.48px;background:#009926;"></div>
<div class="a " style="left:2277.52px;top:961.36px;width:49.72px;height:43.48px;background:#00994c;"></div>
<div class="a " style="left:2330.84px;top:961.36px;width:49.72px;height:43.48px;background:#009973;"></div>
<div class="a " style="left:2384.2px;top:961.36px;width:49.72px;height:43.48px;background:#009999;"></div>
<div class="a " style="left:2437.52px;top:961.36px;width:49.72px;height:43.48px;background:#007399;"></div>
<div class="a " style="left:2490.84px;top:961.36px;width:49.72px;height:43.48px;background:#004c99;"></div>
<div class="a " style="left:2544.2px;top:961.36px;width:49.72px;height:43.48px;background:#002699;"></div>
<div class="a " style="left:2597.52px;top:961.36px;width:49.72px;height:43.48px;background:#000099;"></div>
<div class="a " style="left:2650.84px;top:961.36px;width:49.72px;height:43.48px;background:#260099;"></div>
<div class="a " style="left:2704.16px;top:961.36px;width:49.72px;height:43.48px;background:#4c0099;"></div>
<div class="a " style="left:2757.52px;top:961.36px;width:49.72px;height:43.48px;background:#730099;"></div>
<div class="a " style="left:2810.84px;top:961.36px;width:49.72px;height:43.48px;background:#990099;"></div>
<div class="a " style="left:2864.16px;top:961.36px;width:49.72px;height:43.48px;background:#990073;"></div>
<div class="a " style="left:2917.52px;top:961.36px;width:49.72px;height:43.48px;background:#99004c;"></div>
<div class="a " style="left:2970.84px;top:961.36px;width:49.72px;height:43.48px;background:#990026;"></div>
<div class="a " style="left:1744.2px;top:1008.44px;width:49.72px;height:43.48px;background:#7f0000;"></div>
<div class="a " style="left:1797.52px;top:1008.44px;width:49.72px;height:43.48px;background:#7f2000;"></div>
<div class="a " style="left:1850.88px;top:1008.44px;width:49.72px;height:43.48px;background:#7f4000;"></div>
<div class="a " style="left:1904.2px;top:1008.44px;width:49.72px;height:43.48px;background:#7f5f00;"></div>
<div class="a " style="left:1957.52px;top:1008.44px;width:49.72px;height:43.48px;background:#7f7f00;"></div>
<div class="a " style="left:2010.88px;top:1008.44px;width:49.72px;height:43.48px;background:#5f7f00;"></div>
<div class="a " style="left:2064.2px;top:1008.44px;width:49.72px;height:43.48px;background:#407f00;"></div>
<div class="a " style="left:2117.52px;top:1008.44px;width:49.72px;height:43.48px;background:#207f00;"></div>
<div class="a " style="left:2170.84px;top:1008.44px;width:49.72px;height:43.48px;background:#007f00;"></div>
<div class="a " style="left:2224.2px;top:1008.44px;width:49.72px;height:43.48px;background:#007f20;"></div>
<div class="a " style="left:2277.52px;top:1008.44px;width:49.72px;height:43.48px;background:#007f40;"></div>
<div class="a " style="left:2330.84px;top:1008.44px;width:49.72px;height:43.48px;background:#007f5f;"></div>
<div class="a " style="left:2384.2px;top:1008.44px;width:49.72px;height:43.48px;background:#007f7f;"></div>
<div class="a " style="left:2437.52px;top:1008.44px;width:49.72px;height:43.48px;background:#005f7f;"></div>
<div class="a " style="left:2490.84px;top:1008.44px;width:49.72px;height:43.48px;background:#00407f;"></div>
<div class="a " style="left:2544.2px;top:1008.44px;width:49.72px;height:43.48px;background:#00207f;"></div>
<div class="a " style="left:2597.52px;top:1008.44px;width:49.72px;height:43.48px;background:#00007f;"></div>
<div class="a " style="left:2650.84px;top:1008.44px;width:49.72px;height:43.48px;background:#20007f;"></div>
<div class="a " style="left:2704.16px;top:1008.44px;width:49.72px;height:43.48px;background:#40007f;"></div>
<div class="a " style="left:2757.52px;top:1008.44px;width:49.72px;height:43.48px;background:#5f007f;"></div>
<div class="a " style="left:2810.84px;top:1008.44px;width:49.72px;height:43.48px;background:#7f007f;"></div>
<div class="a " style="left:2864.16px;top:1008.44px;width:49.72px;height:43.48px;background:#7f005f;"></div>
<div class="a " style="left:2917.52px;top:1008.44px;width:49.72px;height:43.48px;background:#7f0040;"></div>
<div class="a " style="left:2970.84px;top:1008.44px;width:49.72px;height:43.48px;background:#7f0020;"></div>
<div class="a " style="left:1744.2px;top:1055.52px;width:49.72px;height:43.48px;background:#4c0000;"></div>
<div class="a " style="left:1797.52px;top:1055.52px;width:49.72px;height:43.48px;background:#4c1300;"></div>
<div class="a " style="left:1850.88px;top:1055.52px;width:49.72px;height:43.48px;background:#4c2600;"></div>
<div class="a " style="left:1904.2px;top:1055.52px;width:49.72px;height:43.48px;background:#4c3900;"></div>
<div class="a " style="left:1957.52px;top:1055.52px;width:49.72px;height:43.48px;background:#4c4c00;"></div>
<div class="a " style="left:2010.88px;top:1055.52px;width:49.72px;height:43.48px;background:#394c00;"></div>
<div class="a " style="left:2064.2px;top:1055.52px;width:49.72px;height:43.48px;background:#264c00;"></div>
<div class="a " style="left:2117.52px;top:1055.52px;width:49.72px;height:43.48px;background:#134c00;"></div>
<div class="a " style="left:2170.84px;top:1055.52px;width:49.72px;height:43.48px;background:#004c00;"></div>
<div class="a " style="left:2224.2px;top:1055.52px;width:49.72px;height:43.48px;background:#004c13;"></div>
<div class="a " style="left:2277.52px;top:1055.52px;width:49.72px;height:43.48px;background:#004c26;"></div>
<div class="a " style="left:2330.84px;top:1055.52px;width:49.72px;height:43.48px;background:#004c39;"></div>
<div class="a " style="left:2384.2px;top:1055.52px;width:49.72px;height:43.48px;background:#004c4c;"></div>
<div class="a " style="left:2437.52px;top:1055.52px;width:49.72px;height:43.48px;background:#00394c;"></div>
<div class="a " style="left:2490.84px;top:1055.52px;width:49.72px;height:43.48px;background:#00264c;"></div>
<div class="a " style="left:2544.2px;top:1055.52px;width:49.72px;height:43.48px;background:#00134c;"></div>
<div class="a " style="left:2597.52px;top:1055.52px;width:49.72px;height:43.48px;background:#00004c;"></div>
<div class="a " style="left:2650.84px;top:1055.52px;width:49.72px;height:43.48px;background:#13004c;"></div>
<div class="a " style="left:2704.16px;top:1055.52px;width:49.72px;height:43.48px;background:#26004c;"></div>
<div class="a " style="left:2757.52px;top:1055.52px;width:49.72px;height:43.48px;background:#39004c;"></div>
<div class="a " style="left:2810.84px;top:1055.52px;width:49.72px;height:43.48px;background:#4c004c;"></div>
<div class="a " style="left:2864.16px;top:1055.52px;width:49.72px;height:43.48px;background:#4c0039;"></div>
<div class="a " style="left:2917.52px;top:1055.52px;width:49.72px;height:43.48px;background:#4c0026;"></div>
<div class="a " style="left:2970.84px;top:1055.52px;width:49.72px;height:43.48px;background:#4c0013;"></div>
<div class="a t" style="left:1715.2px;top:1215.12px;line-height:45.24px;font-size:34.8px;font-family:'DejaVu Sans Condensed','Liberation Sans',sans-serif;color:#000;letter-spacing:0.3px;"><span>Indexfarbe :</span></div>
<div class="a t" style="left:2134.8px;top:1215.12px;line-height:45.24px;font-size:34.8px;font-family:'DejaVu Sans Condensed','Liberation Sans',sans-serif;color:#000;letter-spacing:-1.25px;"><span>250</span></div>
<div class="a t" style="left:2330.8px;top:1215.12px;line-height:45.24px;font-size:34.8px;font-family:'DejaVu Sans Condensed','Liberation Sans',sans-serif;color:#000;letter-spacing:-0.23px;"><span>Rot, Grün, Blau :</span></div>
<div class="a t" style="left:2749.2px;top:1215.12px;line-height:45.24px;font-size:34.8px;font-family:'DejaVu Sans Condensed','Liberation Sans',sans-serif;color:#000;letter-spacing:-0.28px;"><span>51, 51, 51</span></div>
<div class="a t" style="left:1980px;top:1304.32px;line-height:45.24px;font-size:34.8px;font-family:'DejaVu Sans Condensed','Liberation Sans',sans-serif;color:#000;letter-spacing:-0.86px;"><span>Aktuell:</span></div>
<div class="a " style="left:2124px;top:1289.2px;width:232px;height:65.2px;background:#fff;border:5.2px solid;border-color:#747474 #e6e6e6 #e6e6e6 #747474;"></div>
<div class="a cb" style="left:2380px;top:1289.2px;width:136px;height:66.8px;"></div>
<div class="a t" style="left:2402.4px;top:1299.92px;line-height:45.24px;font-size:34.8px;font-family:'DejaVu Sans Condensed','Liberation Sans',sans-serif;color:#000;"><span>7</span></div>
<div class="a " style="left:1659.2px;top:1418px;width:62.8px;height:68px;background:#eeeeee;"></div>
<svg class="a" style="left:1664px;top:1426px" width="51.2" height="51.2" viewBox="0 0 12 12"><circle cx="6" cy="6" r="6" fill="#4b4b4b"/><text x="6" y="9.3" text-anchor="middle" font-family="Liberation Sans,sans-serif" font-weight="bold" font-size="9.5" fill="#fff">?</text></svg>
<div class="a btn" style="left:2658.4px;top:1419.2px;width:230.8px;height:68.8px;"></div>
<div class="a t" style="left:2749.2px;top:1433.12px;line-height:45.24px;font-size:34.8px;font-family:'DejaVu Sans Condensed','Liberation Sans',sans-serif;color:#000;letter-spacing:-0.18px;"><span>OK</span></div>
<div class="a btn" style="left:2910px;top:1419.2px;width:235.2px;height:68.8px;border-color:#b0c6e2;background:#f8fbfe;"></div>
<div class="a t" style="left:2944.8px;top:1433.12px;line-height:45.24px;font-size:34.8px;font-family:'DejaVu Sans Condensed','Liberation Sans',sans-serif;color:#000;letter-spacing:-0.61px;"><span>Abbrechen</span></div>
</div>
</body></html>
